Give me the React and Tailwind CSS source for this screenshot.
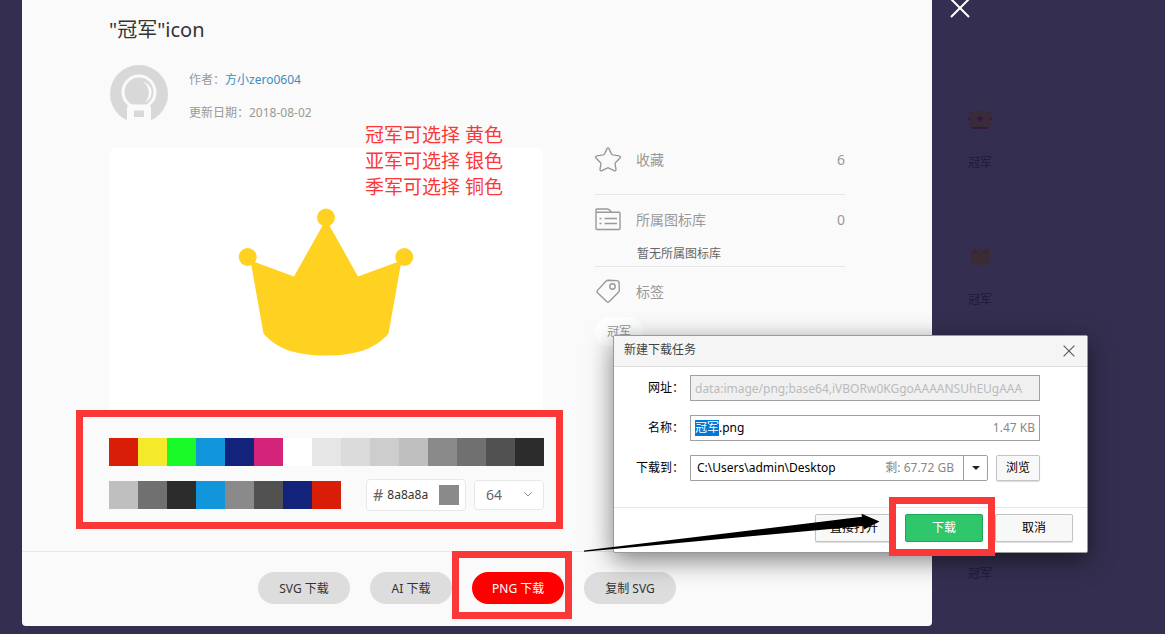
import { useEffect, useRef } from 'react';

const palette = [
  'bg-[#d81e06]', 'bg-[#f4ea2a]', 'bg-[#1afa29]', 'bg-[#1296db]', 'bg-[#13227a]',
  'bg-[#d4237a]', 'bg-white', 'bg-[#e6e6e6]', 'bg-[#dbdbdb]', 'bg-[#cdcdcd]',
  'bg-[#bfbfbf]', 'bg-[#8a8a8a]', 'bg-[#707070]', 'bg-[#515151]', 'bg-[#2c2c2c]',
];

const recent = [
  'bg-[#bfbfbf]', 'bg-[#707070]', 'bg-[#2c2c2c]', 'bg-[#1296db]',
  'bg-[#8a8a8a]', 'bg-[#515151]', 'bg-[#13227a]', 'bg-[#d81e06]',
];

const Avatar = () => (
  <svg viewBox="0 0 58 58" className="w-[58px] h-[58px]">
    <circle cx="29" cy="29" r="29" fill="#d8d8d8" />
    <circle cx="29" cy="27" r="16" fill="none" stroke="#fafafa" strokeWidth="3" />
    <path d="M32.500 16.500C39 18.500 42 23 41.500 28 41 33 38.500 35.500 35.500 37 38.500 33 39.500 29 38.500 25 37.500 21 35.500 18.500 32.500 16.500z" fill="#fafafa" />
    <path d="M17 58V44c0-3 1-4.500 3-4.500h18c2 0 3 1.500 3 4.500v14z" fill="#fafafa" />
    <rect x="24" y="45.500" width="10" height="6.500" fill="#d8d8d8" />
    <path d="M0 55.500h58V58H0z" fill="#fafafa" />
  </svg>
);

const Crown = () => (
  <svg viewBox="0 0 176 148" className="w-[176px] h-[148px]" fill="#ffd121">
    <circle cx="88" cy="9.500" r="9" />
    <circle cx="9.700" cy="49" r="9" />
    <circle cx="166.300" cy="49" r="9" />
    <path d="M12.500 52.500 56 68.500 86 15h4l30 53.500 43.500-16L150.500 125.500C138 140 120 147.500 88 147.500S38 140 25.500 125.500z" />
  </svg>
);

const StarIcon = () => (
  <svg viewBox="0 0 26 26" className="w-[26px] h-[26px] shrink-0" fill="none" stroke="#999" strokeWidth="1.400" strokeLinejoin="round">
    <path d="M12 1.600Q13 .1 14 1.600L16.300 6.800Q16.700 7.700 17.700 7.900L24 8.900Q26.200 9.500 24.800 11.200L20.600 15.500Q20 16.200 20.100 17.100L21 22.300Q21 24.500 19 23.700L14 21.200Q13 20.700 12 21.200L7 23.700Q5 24.500 5 22.300L5.900 17.100Q6 16.200 5.400 15.500L1.200 11.200Q-.2 9.500 2 8.900L8.300 7.900Q9.300 7.700 9.700 6.800z" />
  </svg>
);

const FolderIcon = () => (
  <svg viewBox="0 0 26 24" className="w-[26px] h-[24px] shrink-0" fill="none" stroke="#999" strokeWidth="1.400">
    <path d="M1 20.500V2Q1 1 2 1H12Q14 1 15 2.500L16.500 4.300H24Q25 4.300 25 5.300V20.500Q25 21.500 24 21.500H2Q1 21.500 1 20.500zM1 4.300H16.500" />
    <path d="M9.500 10.500H22M9.500 15.500H22M4.500 10.500H6.500M4.500 15.500H6.500" />
  </svg>
);

const TagIcon = () => (
  <svg viewBox="0 0 26 26" className="w-[26px] h-[26px] shrink-0" fill="none" stroke="#999" strokeWidth="1.400" strokeLinejoin="round">
    <path d="M11.200 2Q12 1.200 13.200 1.200L21.800 1.600Q24 1.800 24.100 4L24.300 11.300Q24.300 12.500 23.500 13.300L14 22.800Q13 23.700 12 22.800L2.500 13.800Q1.400 12.600 2.500 11.400z" />
    <circle cx="17.500" cy="7.500" r="2.700" />
  </svg>
);

const CloseIcon = ({ className }) => (
  <svg viewBox="0 0 20 20" className={className} fill="none" stroke="currentColor">
    <path d="M1 1 19 19M19 1 1 19" />
  </svg>
);

const DimCrown = ({ jewels }) =>
  jewels ? (
    <svg viewBox="0 0 24 22" className="w-6 h-[22px]">
      <path d="M1 6q0-2 2-2 3-1 4 1l3-3q2-1.500 4 0l3 3q1-2 4-1 2 0 2 2v10q-1 4-4 4H5q-3 0-4-4z" fill="#3a2b3a" />
      <path d="M12 7.500l3.500 3-3.500 3-3.500-3zM0 11l1.500-1.500L3 11l-1.500 1.500zM21 11l1.500-1.500L24 11l-1.500 1.500zM4 19h16v2H4z" fill="#391545" />
    </svg>
  ) : (
    <svg viewBox="0 0 24 22" className="w-6 h-[22px]">
      <path d="M4 6l3-3 3 4v4H4zM15 7l3-4 3 3v5h-6z" fill="#3e2237" />
      <path d="M2 5l4 3 3 1 2.500-7h2L16 9l3-1 4-3-2 13q-.5 2-3 2H7q-3 0-3-2z" fill="#3a2c35" />
    </svg>
  );

const Swatches = ({ colors }) => (
  <div className="flex">
    {colors.map((color, index) => (
      <button key={index} type="button" aria-label="颜色" className={`w-[29px] h-7 ${color}`} />
    ))}
  </div>
);

const pill = 'h-8 px-5 pt-px min-w-[82px] rounded-full text-xs whitespace-nowrap';
const dialogButton = 'w-[78px] h-7 rounded-xs border border-[#c3c3c3] bg-[#f8f8f8] text-xs text-black whitespace-nowrap shadow-[0_1px_1px_#ddd]';

const DownloadDialog = () => {
  const nameRef = useRef(null);

  // Preselect the file name without its extension
  useEffect(() => {
    nameRef.current.focus();
    nameRef.current.setSelectionRange(0, 2);
  }, []);

  return (
    <div role="dialog" aria-labelledby="dialog-title" className="absolute left-[613px] top-[335px] w-[475px] rounded-xs border border-[#98999c] bg-white text-xs text-black shadow-[0_7px_26px_rgba(0,0,0,0.5)]">
      <div className="flex items-center justify-between h-[31px] pl-2.5 pr-3 bg-[#f5f5f5] border-b border-[#dcdcdc]">
        <h2 id="dialog-title" className="text-[#444] pb-0.5">新建下载任务</h2>
        <button type="button" aria-label="关闭" className="text-[#555]">
          <CloseIcon className="w-3 h-3 [stroke-width:1.8]" />
        </button>
      </div>

      <div className="grid grid-cols-[70px_1fr] gap-x-1.5 gap-y-[14px] pt-2 pr-[47px] pb-[26px] items-center">
        <label htmlFor="url" className="text-right">网址：</label>
        <input id="url" disabled defaultValue="data:image/png;base64,iVBORw0KGgoAAAANSUhEUgAAA" className="h-[26px] w-full min-w-0 px-1 border border-[#a0a0a0] bg-[#f0f0f0] text-[#bbb]" />

        <label htmlFor="name" className="text-right">名称：</label>
        <div className="flex items-center h-[26px] px-1 border border-[#a0a0a0]">
          <input id="name" ref={nameRef} defaultValue="冠军.png" className="flex-1 min-w-0 outline-none caret-transparent selection:bg-[#0078d7] selection:text-white" />
          <span className="text-[#888]">1.47 KB</span>
        </div>

        <label htmlFor="folder" className="text-right">下载到：</label>
        <div className="flex gap-2">
          <div className="flex flex-1 min-w-0 items-center h-[26px] border border-[#a0a0a0] rounded-r-xs">
            <input id="folder" defaultValue="C:\Users\admin\Desktop" className="flex-1 min-w-0 pl-1.5 outline-none" />
            <span className="pr-[9px] text-[#888]">剩: 67.72 GB</span>
            <button type="button" aria-label="选择目录" className="flex items-center justify-center w-6 h-full border-l border-[#a0a0a0]">
              <svg viewBox="0 0 8 4" className="w-2 h-1"><path d="M0 0h8L4 4z" fill="#222" /></svg>
            </button>
          </div>
          <button type="button" className="w-11 h-[26px] rounded-xs border border-[#c3c3c3] bg-[#f8f8f8] shadow-[0_1px_1px_#ddd]">浏览</button>
        </div>
      </div>

      <div className="flex justify-end gap-3 border-t border-[#e6e6e6] pt-1.5 pb-2.5 pr-3.5">
        <button type="button" className={dialogButton}>直接打开</button>
        <div className="relative z-20">
          <button type="button" className="w-[78px] h-7 rounded-xs border border-[#1aa557] bg-[#30c66b] text-xs text-white">下载</button>
          <div className="absolute -left-4 -right-3 -top-[17px] -bottom-3.5 border-7 border-[#fb3838] pointer-events-none" />
        </div>
        <button type="button" className={dialogButton}>取消</button>
      </div>

      {/* Arrow pointing at the download button */}
      <svg viewBox="0 0 296 40" className="absolute -left-[30px] top-[177px] z-10 w-[296px] h-10 pointer-events-none">
        <path d="M0 37.500 278 3.800 277.500 .800 295.500 8.500 280 16.500 279 13 0 38.700z" fill="#000" />
      </svg>
    </div>
  );
};

const App = () => {
  return (
    <div className={`relative flex items-start min-h-screen overflow-hidden bg-[#342f50] font-["Noto_Sans","Noto_Sans_CJK_SC",sans-serif]`}>
      <main className="flex-1 ml-[22px] bg-[#fafafa] rounded-b">
        <div className="px-[87px] pt-4 pb-10">
          <h1 className="text-xl/7 text-[#333]">"冠军"icon</h1>

          <div className="flex mt-[21px] gap-[21px] pl-px">
            <Avatar />
            <div className="flex flex-col gap-[17px] pt-[7px] text-xs text-[#999]">
              <p>作者：<a href="#" className="text-[#3c8dbc]">方小zero0604</a></p>
              <p>更新日期：2018-08-02</p>
            </div>
          </div>

          <div className="grid grid-cols-[435px_1fr] gap-x-[51px] mt-[25px]">
            <div>
              <div className="relative flex items-center justify-center h-[267px] w-[434px] bg-white rounded-lg">
                <Crown />
                <p className="absolute left-64 -top-[26px] text-[19px]/[26px] text-[#fb3838] whitespace-nowrap">
                  冠军可选择 黄色<br />
                  亚军可选择 银色<br />
                  季军可选择 铜色
                </p>
              </div>

              <div className="relative mt-[23px]">
                <Swatches colors={palette} />
                <div className="flex items-center justify-between mt-[13px]">
                  <Swatches colors={recent} />
                  <div className="flex items-center gap-2">
                    <div className="flex items-center w-[100px] h-8 px-1.5 gap-1 bg-white border border-[#e8e8e8] rounded">
                      <label htmlFor="hex" className="text-base text-[#666]">#</label>
                      <input id="hex" defaultValue="8a8a8a" className="flex-1 min-w-0 text-xs text-[#333] outline-none" />
                      <span className="w-5 h-5 bg-[#8a8a8a]" />
                    </div>
                    <div className="relative">
                      <select aria-label="尺寸" className="appearance-none w-[70px] h-[30px] pl-[11px] bg-white border border-[#e8e8e8] rounded text-sm text-[#666]">
                        <option>64</option>
                      </select>
                      <svg viewBox="0 0 8 5" className="absolute right-3 top-3 w-2 h-[5px] pointer-events-none" fill="none" stroke="#888">
                        <path d="M.5.500 4 4 7.500.500" />
                      </svg>
                    </div>
                  </div>
                </div>
                <div className="absolute -left-[33px] -right-[19px] -top-7 -bottom-[18px] border-7 border-[#fb3838] pointer-events-none" />
              </div>
            </div>

            <aside className="text-sm text-[#999]">
              <div className="flex items-center gap-[15px] h-[47px] pb-[23px] border-b border-[#e6e6e6]">
                <StarIcon />
                <span className="flex-1">收藏</span>
                <span>6</span>
              </div>
              <div className="pt-3.5 pb-0.5 border-b border-[#e6e6e6]">
                <div className="flex items-center gap-[15px] h-[22px]">
                  <FolderIcon />
                  <span className="flex-1">所属图标库</span>
                  <span>0</span>
                </div>
                <p className="mt-[13px] pl-[42px] text-xs/5 text-[#666]">暂无所属图标库</p>
              </div>
              <div className="flex items-center gap-[15px] h-[22px] mt-3.5">
                <TagIcon />
                <span>标签</span>
              </div>
              <a href="#" className="inline-flex items-center h-[29px] mt-3.5 px-3 rounded-full bg-white text-xs">冠军</a>
            </aside>
          </div>
        </div>

        <div className="flex justify-center gap-5 pt-5 pb-[22px] pr-5 border-t border-[#e6e6e6]">
          <button type="button" className={`${pill} bg-[#ddd] text-[#333] w-[92px]`}>SVG 下载</button>
          <button type="button" className={`${pill} bg-[#ddd] text-[#333]`}>AI 下载</button>
          <div className="relative">
            <button type="button" className={`${pill} bg-[#f00] text-white w-[92px]`}>PNG 下载</button>
            <div className="absolute -left-5 -right-2 -top-[21px] -bottom-[15px] border-7 border-[#fb3838] pointer-events-none" />
          </div>
          <button type="button" className={`${pill} bg-[#ddd] text-[#333] w-[92px]`}>复制 SVG</button>
        </div>
      </main>

      {/* Dimmed results behind the overlay */}
      <div className="w-[233px] pl-[18px] text-xs text-[#1f1a3d]">
        <button type="button" aria-label="关闭" className="block -mt-0.5 h-5 text-white">
          <CloseIcon className="w-5 h-5 [stroke-width:2]" />
        </button>
        <ul className="pl-[18px] pt-[90px]">
          {[true, false, null, false].map((jewels, index) => (
            <li key={index} className="flex flex-col items-start gap-[25px] h-[137px]">
              {jewels !== null && (
                <>
                  <DimCrown jewels={jewels} />
                  <span>冠军</span>
                </>
              )}
            </li>
          ))}
        </ul>
      </div>

      <DownloadDialog />
    </div>
  );
};

export default App;
